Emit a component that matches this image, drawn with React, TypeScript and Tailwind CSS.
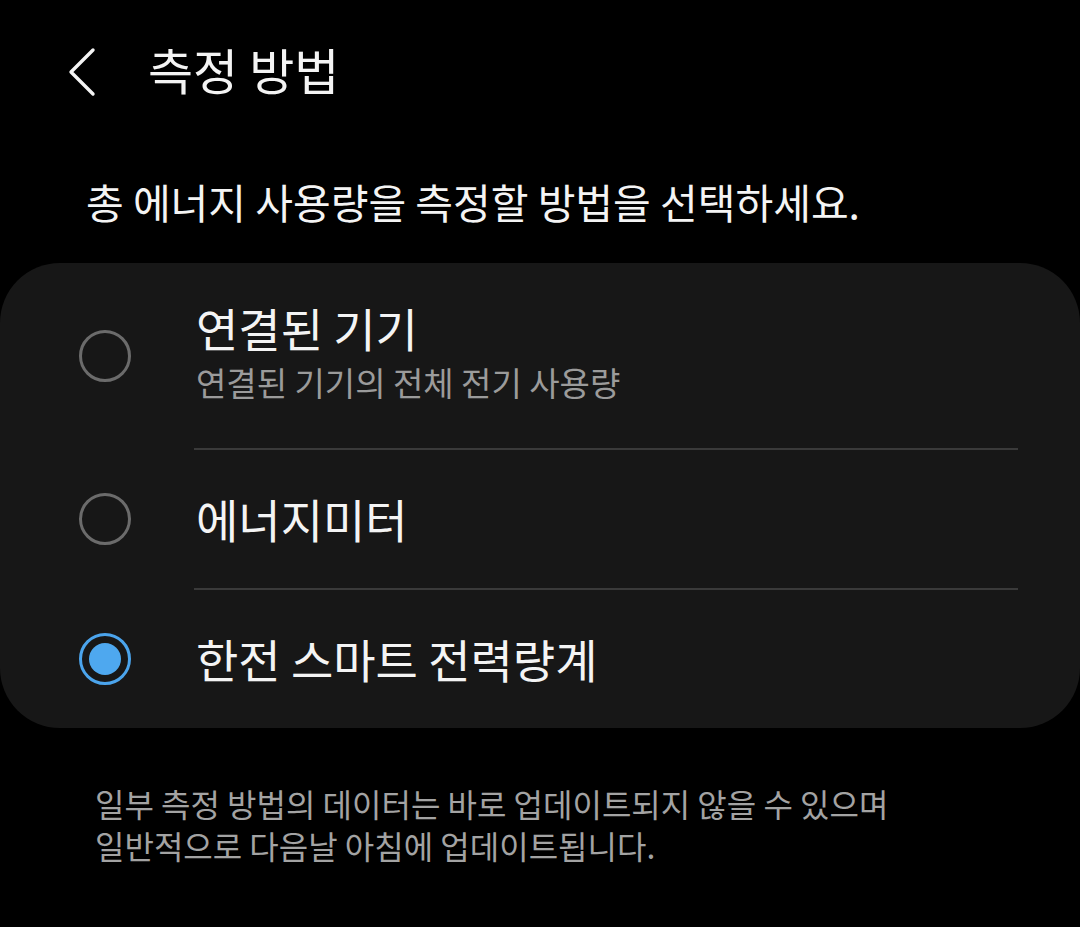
import React from "react";

const font = { fontFamily: '"Noto Sans CJK KR", "Noto Sans", sans-serif' };

function Radio({ checked }: { checked?: boolean }) {
  if (checked) {
    return (
      <div className="w-[52px] h-[52px] rounded-full border-[3px] border-[#4ba4ec] flex items-center justify-center shrink-0">
        <div className="w-[32px] h-[32px] rounded-full bg-[#4ea8ef]" />
      </div>
    );
  }
  return <div className="w-[52px] h-[52px] rounded-full border-[3px] border-[#6b6b6b] shrink-0" />;
}

export default function App() {
  return (
    <div className="w-[1080px] h-[927px] bg-black text-[#f4f4f4] overflow-hidden" style={font}>
      <div className="h-[150px] flex items-center pl-[66px] pb-[6px]">
        <svg width="32" height="50" viewBox="0 0 32 50" className="shrink-0">
          <path d="M27 3 L5 25 L27 47" fill="none" stroke="#f4f4f4" strokeWidth="3.4" strokeLinecap="round" strokeLinejoin="round" />
        </svg>
        <div className="ml-[50px] text-[49px] leading-[60px] font-normal mb-[7px]">측정 방법</div>
      </div>
      <div className="pl-[86px] h-[113px] pt-[26px] text-[41px] leading-[50px]">총 에너지 사용량을 측정할 방법을 선택하세요.</div>
      <div className="bg-[#171717] rounded-[60px]">
        <div className="h-[185px] flex items-center pl-[79px]">
          <Radio />
          <div className="ml-[65px] flex flex-col mb-[8px]">
            <div className="text-[46px] leading-[54px]">연결된 기기</div>
            <div className="mt-[7px] text-[33px] leading-[42px] text-[#9b9b9b]">연결된 기기의 전체 전기 사용량</div>
          </div>
        </div>
        <div className="ml-[194px] mr-[62px] h-[2px] bg-[#3a3a3a]" />
        <div className="h-[138px] flex items-center pl-[79px]">
          <Radio />
          <div className="ml-[65px] text-[46px] leading-[54px] mb-[2px]">에너지미터</div>
        </div>
        <div className="ml-[194px] mr-[62px] h-[2px] bg-[#3a3a3a]" />
        <div className="h-[138px] flex items-center pl-[79px]">
          <Radio checked />
          <div className="ml-[65px] text-[46px] leading-[54px] mb-[2px]">한전 스마트 전력량계</div>
        </div>
      </div>
      <div className="pl-[95px] pt-[54px] text-[32px] leading-[42px] text-[#a3a3a3]">
        <div>일부 측정 방법의 데이터는 바로 업데이트되지 않을 수 있으며</div>
        <div>일반적으로 다음날 아침에 업데이트됩니다.</div>
      </div>
    </div>
  );
}
